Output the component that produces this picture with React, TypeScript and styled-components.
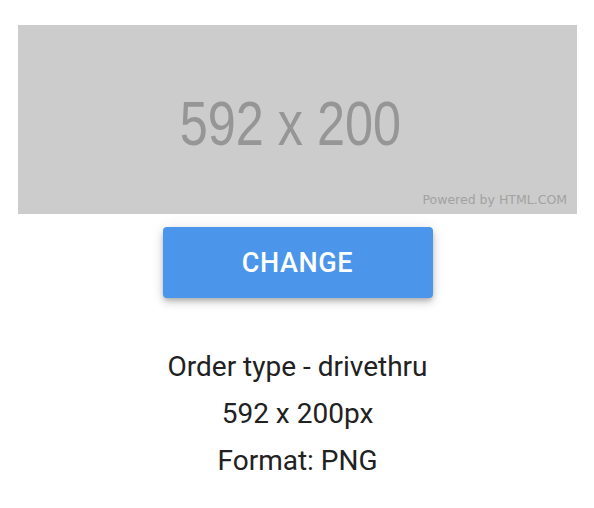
import React from "react";
import styled, { createGlobalStyle } from "styled-components";

const Global = createGlobalStyle`
  html, body { margin: 0; padding: 0; background: #ffffff; }
  body { font-family: Roboto, "Noto Sans", sans-serif; }
`;

const Page = styled.div`
  display: flex;
  flex-direction: column;
  align-items: center;
  padding: 25px 17px 0 18px;
`;

const Placeholder = styled.div`
  position: relative;
  width: 559px;
  height: 188.5px;
  background: #cccccc;
  display: flex;
  align-items: center;
  justify-content: center;
  overflow: hidden;
`;

const PlaceholderSize = styled.span`
  font-family: "Liberation Sans", Arial, sans-serif;
  font-size: 63px;
  color: #969696;
  transform: translate(-7px, 4px) scaleX(0.8);
  white-space: nowrap;
`;

const Credit = styled.span`
  position: absolute;
  right: 10px;
  bottom: 7px;
  font-family: "DejaVu Sans", Verdana, sans-serif;
  font-size: 12.5px;
  color: #a2a2a2;
  white-space: nowrap;
`;

const ChangeButton = styled.button`
  margin-top: 13.5px;
  width: 270px;
  height: 71px;
  border: none;
  border-radius: 4px;
  background: #4b96ea;
  color: #ffffff;
  font-family: Roboto, sans-serif;
  font-weight: 500;
  font-size: 27px;
  letter-spacing: 0.6px;
  text-transform: uppercase;
  box-shadow: 0 3px 5px -1px rgba(0, 0, 0, 0.2), 0 5px 8px 0 rgba(0, 0, 0, 0.12),
    0 1px 14px 0 rgba(0, 0, 0, 0.1);
  cursor: pointer;
`;

const Details = styled.div`
  margin-top: 45px;
  display: flex;
  flex-direction: column;
  align-items: center;
`;

const DetailLine = styled.div`
  font-family: Roboto, sans-serif;
  font-size: 28px;
  line-height: 47px;
  color: #212121;
`;

export default function App() {
  return (
    <>
      <Global />
      <Page>
        <Placeholder>
          <PlaceholderSize>592 x 200</PlaceholderSize>
          <Credit>Powered by HTML.COM</Credit>
        </Placeholder>
        <ChangeButton>Change</ChangeButton>
        <Details>
          <DetailLine>Order type - drivethru</DetailLine>
          <DetailLine>592 x 200px</DetailLine>
          <DetailLine>Format: PNG</DetailLine>
        </Details>
      </Page>
    </>
  );
}
